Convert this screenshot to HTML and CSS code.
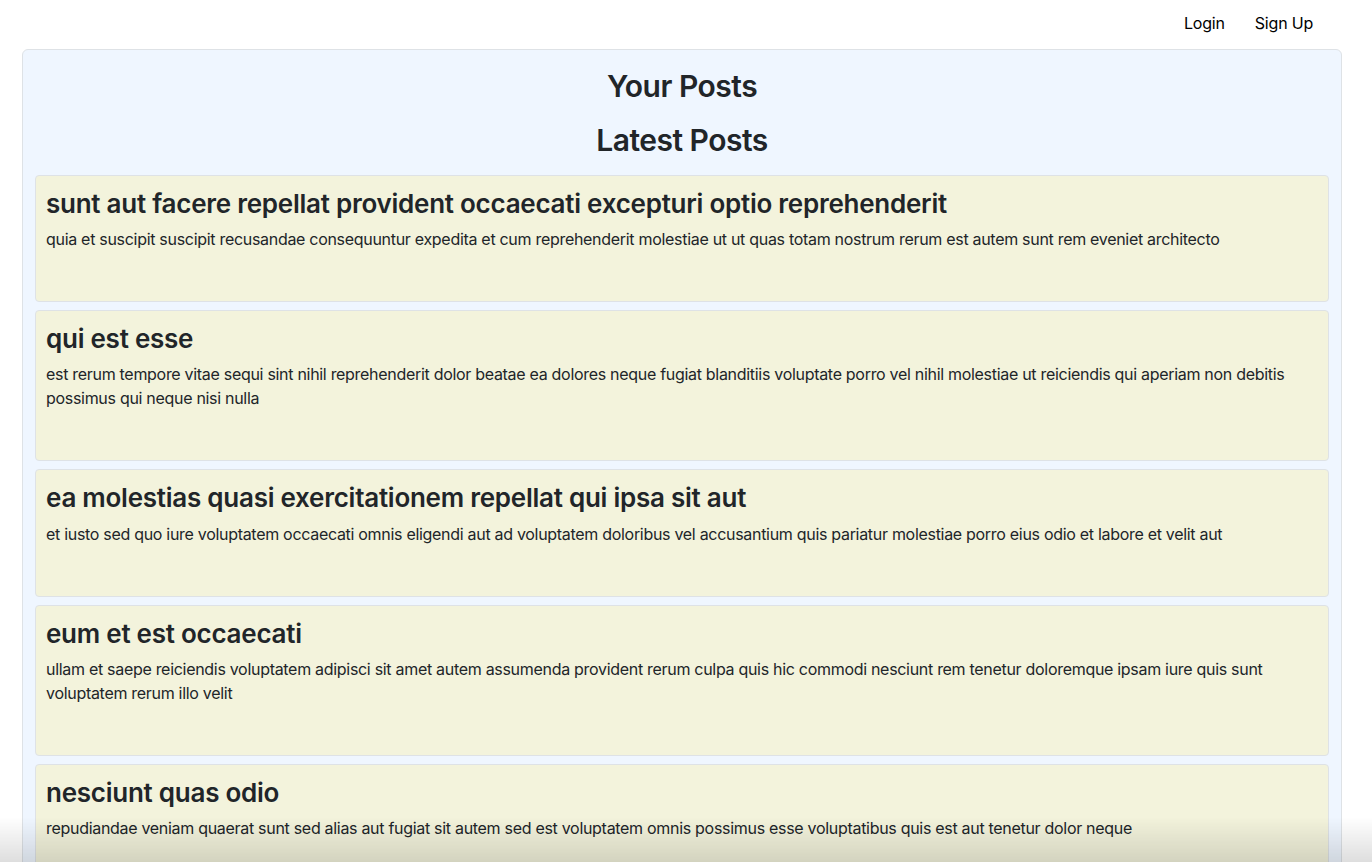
FILE: index.html
```html
<!DOCTYPE html>
<html lang="en">
<head>
<meta charset="utf-8">
<title>Posts</title>
<link rel="stylesheet" href="styles.css">
</head>
<body>
<nav class="topnav">
  <a class="nav-link" href="#">Login</a>
  <a class="nav-link" href="#">Sign Up</a>
</nav>
<main class="panel">
  <h2 class="section-title">Your Posts</h2>
  <h2 class="section-title">Latest Posts</h2>
  <div class="posts">
    <article class="post">
      <h3 class="post-title">sunt aut facere repellat provident occaecati excepturi optio reprehenderit</h3>
      <p class="post-body">quia et suscipit suscipit recusandae consequuntur expedita et cum reprehenderit molestiae ut ut quas totam nostrum rerum est autem sunt rem eveniet architecto</p>
    </article>
    <article class="post">
      <h3 class="post-title">qui est esse</h3>
      <p class="post-body">est rerum tempore vitae sequi sint nihil reprehenderit dolor beatae ea dolores neque fugiat blanditiis voluptate porro vel nihil molestiae ut reiciendis qui aperiam non debitis possimus qui neque nisi nulla</p>
    </article>
    <article class="post">
      <h3 class="post-title">ea molestias quasi exercitationem repellat qui ipsa sit aut</h3>
      <p class="post-body">et iusto sed quo iure voluptatem occaecati omnis eligendi aut ad voluptatem doloribus vel accusantium quis pariatur molestiae porro eius odio et labore et velit aut</p>
    </article>
    <article class="post">
      <h3 class="post-title">eum et est occaecati</h3>
      <p class="post-body">ullam et saepe reiciendis voluptatem adipisci sit amet autem assumenda provident rerum culpa quis hic commodi nesciunt rem tenetur doloremque ipsam iure quis sunt voluptatem rerum illo velit</p>
    </article>
    <article class="post">
      <h3 class="post-title">nesciunt quas odio</h3>
      <p class="post-body">repudiandae veniam quaerat sunt sed alias aut fugiat sit autem sed est voluptatem omnis possimus esse voluptatibus quis est aut tenetur dolor neque</p>
    </article>
  </div>
</main>
<div class="bottom-fade"></div>
</body>
</html>
```

FILE: styles.css
```css
* { box-sizing: border-box; }
html, body { margin: 0; padding: 0; }
body {
  font-family: Inter, "Noto Sans", "Liberation Sans", sans-serif;
  font-size: 16px;
  line-height: 1.5;
  color: #212529;
  background: #ffffff;
  overflow: hidden;
  letter-spacing: -0.3px;
}
.topnav {
  display: flex;
  justify-content: flex-end;
  height: 49px;
  padding: 0 43px 0 0;
  align-items: center;
}
.nav-link {
  color: #000;
  text-decoration: none;
  padding: 8px 16px;
  font-size: 16px;
  letter-spacing: -0.2px;
  position: relative;
  top: -2px;
}
.nav-link:first-child { margin-right: -2px; }
.panel {
  margin-left: 22px;
  width: 1320px;
  background: #eff6ff;
  border: 1px solid #dee2e6;
  border-radius: 6px;
  padding: 18px 12px 0;
  min-height: 900px;
}
.section-title {
  margin: 0 0 18px;
  text-align: center;
  font-size: 30px;
  font-weight: 600;
  line-height: 1.2;
  letter-spacing: -0.5px;
}
.section-title + .section-title { margin-bottom: 17px; }
.posts {
  display: flex;
  flex-direction: column;
  gap: 8px;
}
.post {
  background: #f3f3dc;
  border: 1px solid #dee2e6;
  border-radius: 4px;
  padding: 12px 10px 34px;
}
.post-title {
  margin: 0 0 8px;
  font-size: 26px;
  font-weight: 600;
  line-height: 1.2;
  letter-spacing: -0.25px;
}
.post-body {
  margin: 0 0 16px;
}
.bottom-fade {
  position: fixed;
  left: 0;
  right: 0;
  bottom: 0;
  height: 45px;
  background: linear-gradient(to bottom, rgba(0,0,0,0), rgba(0,0,0,0.13));
  pointer-events: none;
}
```
